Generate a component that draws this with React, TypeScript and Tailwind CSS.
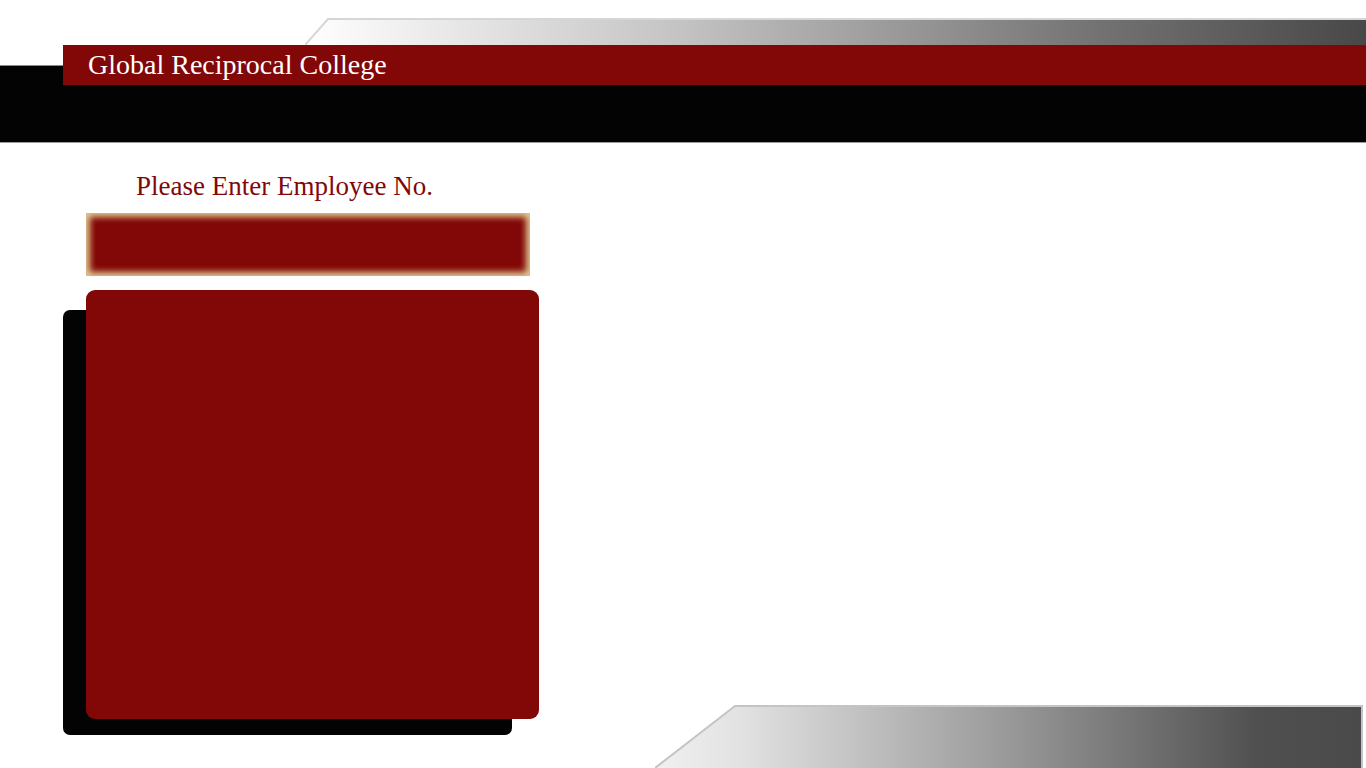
import React from 'react';

const TopBand = () => (
  <svg className="block h-[27px] w-full" viewBox="0 0 1061 27" preserveAspectRatio="none">
    <defs>
      <linearGradient id="topGrad" x1="0" x2="1" y1="0" y2="0">
        <stop offset="0" stopColor="#ffffff" />
        <stop offset="0.35" stopColor="#c4c4c4" />
        <stop offset="0.75" stopColor="#727272" />
        <stop offset="1" stopColor="#484848" />
      </linearGradient>
    </defs>
    <polygon points="0,27 23,1 1061,1 1061,27" fill="url(#topGrad)" />
    <polyline points="0,27 23,1 1061,1" fill="none" stroke="#d6d6d6" strokeWidth="2" />
  </svg>
);

const BottomBand = () => (
  <svg className="block h-[63px] w-full" viewBox="0 0 708 63" preserveAspectRatio="none">
    <defs>
      <linearGradient id="botGrad" x1="0" x2="1" y1="0" y2="0">
        <stop offset="0" stopColor="#f0f0f0" />
        <stop offset="0.12" stopColor="#e2e2e2" />
        <stop offset="0.5" stopColor="#999999" />
        <stop offset="0.85" stopColor="#505050" />
        <stop offset="1" stopColor="#4a4a4a" />
      </linearGradient>
    </defs>
    <polygon points="0,63 80,1 707,1 707,63" fill="url(#botGrad)" />
    <polyline points="0,63 80,1 707,1 707,63" fill="none" stroke="#c4c4c4" strokeWidth="2" />
  </svg>
);

export default function App() {
  return (
    <div className="h-[768px] w-[1366px] overflow-hidden bg-white" style={{ fontFamily: 'Georgia, "Liberation Serif", serif' }}>
      {/* header */}
      <div className="h-[45px] pt-[18px] pl-[305px]">
        <TopBand />
      </div>
      <div className="flex h-[40px]">
        <div className="flex w-[63px] flex-col">
          <div className="h-[20px] bg-white" />
          <div className="h-[20px] border-t border-[#8a8a8a] bg-[#030303]" />
        </div>
        <div className="flex flex-1 items-center bg-[#820707] pl-[25px]">
          <span className="text-[28px] leading-none text-white">Global Reciprocal College</span>
        </div>
      </div>
      <div className="h-[58px] border-b border-[#9a9a9a] bg-[#030303]" />

      {/* body */}
      <div className="flex h-[625px]">
        <div className="w-[540px] pl-[86px]">
          <div className="mt-[28px] pl-[50px] text-[27px] leading-[30px] text-[#820707]">Please Enter Employee No.</div>
          <div className="mt-[12px] h-[63px] w-[444px] bg-[#820707] shadow-[inset_0_0_6px_4px_#e3c891]" />
          <div className="mt-[14px] h-[429px] w-[453px] rounded-[9px] bg-[#820707] shadow-[-25px_18px_0_-2px_#030303]" />
        </div>
        <div className="flex flex-1 flex-col justify-end pl-[115px] pr-[3px]">
          <BottomBand />
        </div>
      </div>
    </div>
  );
}
